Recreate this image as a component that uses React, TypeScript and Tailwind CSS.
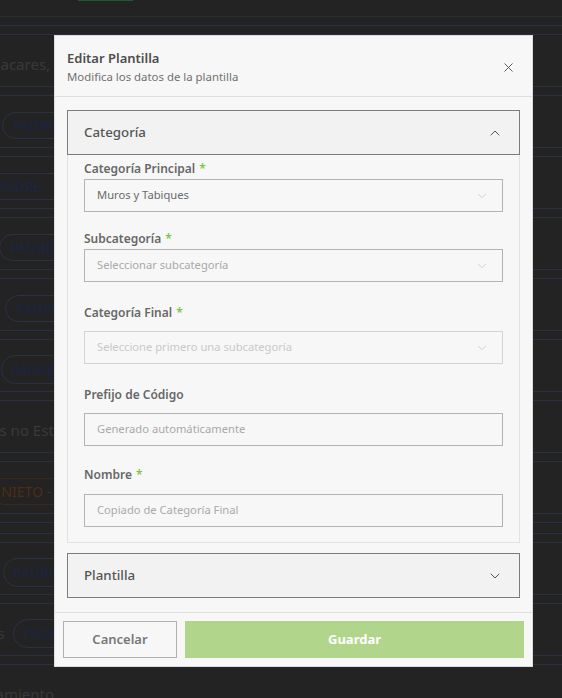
import { ChevronDown, ChevronUp, X } from "lucide-react";

const font = { fontFamily: '"Noto Sans", "Open Sans", sans-serif' };

function Pill({ text, tone = "blue" }: { text: string; tone?: "blue" | "orange" }) {
    const cls =
        tone === "orange"
            ? "border-[#3a2a1c] text-[#4e2e10]"
            : "border-[#2a3244] text-[#1b2542]";
    return (
        <span className={`whitespace-nowrap rounded-full border px-[10px] py-[3px] text-[14px] ${cls}`}>
            {text}
        </span>
    );
}

function BgRow({ children }: { children: React.ReactNode }) {
    return (
        <div className="flex h-[53px] shrink-0 items-center border-y border-[#2a3040] pt-2">
            <div className="flex w-[54px] justify-end whitespace-nowrap text-[15px] text-[#393939]">
                {children}
            </div>
        </div>
    );
}

function Field({
    label,
    required,
    value,
    placeholder,
    select,
    disabled,
    gap,
    top,
}: {
    label: string;
    required?: boolean;
    value?: string;
    placeholder?: string;
    select?: boolean;
    disabled?: boolean;
    gap: string;
    top: string;
}) {
    return (
        <div className={`flex flex-col ${top}`}>
            <label className={`text-[12px] font-semibold leading-4 text-[#676767] ${gap}`}>
                {label}
                {required && <span className="ml-1 text-[#7fc447]">*</span>}
            </label>
            <div
                className={`flex h-[33px] items-center justify-between border bg-[#f7f7f7] pl-3 pr-[13px] text-[11.2px] ${
                    disabled ? "border-[#d4d4d4]" : "border-[#b3b3b3]"
                }`}
            >
                <span className={value ? "text-[#6a6a6a]" : disabled ? "text-[#c9c9c9]" : "text-[#a9a9a9]"}>
                    {value || placeholder}
                </span>
                {select && <ChevronDown className="h-[14px] w-[14px] text-[#c4c4c4]" strokeWidth={1.25} />}
            </div>
        </div>
    );
}

function SectionHeader({ title, open }: { title: string; open?: boolean }) {
    return (
        <div className="flex h-[45px] items-center justify-between border border-[#7c7c7c] bg-[#f2f2f2] pl-4 pr-4">
            <span className="text-[13.3px] font-medium text-[#555]">{title}</span>
            {open ? (
                <ChevronUp className="h-4 w-4 text-[#555]" strokeWidth={1.5} />
            ) : (
                <ChevronDown className="h-4 w-4 text-[#555]" strokeWidth={1.5} />
            )}
        </div>
    );
}

export default function App() {
    return (
        <div className="relative h-[698px] w-[562px] overflow-hidden bg-[#232323]" style={font}>
            {/* page behind the overlay */}
            <div className="flex flex-col">
                <div className="h-[17px] border-b border-[#26302a]">
                    <div className="ml-[78px] h-[1px] w-[55px] bg-[#1f5a2a]" />
                </div>
                <div className="mt-[8px] h-[1px] bg-[#2a3040]" />
                <div className="flex flex-col gap-[8px] pt-[8px]">
                    <BgRow>
                        <span className="text-[#3a3a3a]">Aplacares,&nbsp;</span>
                    </BgRow>
                    <BgRow>
                        <span className="mr-[-33px]"><Pill text="PADRE - E" /></span>
                    </BgRow>
                    <BgRow>
                        <span className="mr-[-18px]"><Pill text="PADRE - E" /></span>
                    </BgRow>
                    <BgRow>
                        <span className="mr-[-30px]"><Pill text="PADRE - E" /></span>
                    </BgRow>
                    <BgRow>
                        <span className="mr-[-36px]"><Pill text="PADRE - E" /></span>
                    </BgRow>
                    <BgRow>
                        <span className="mr-[-12px] flex items-center gap-2">
                            <span>ues</span>
                            <Pill text="PADRE" />
                        </span>
                    </BgRow>
                    <BgRow>
                        <span className="mr-[-6px] text-[#3a3a3a]">s no Estr</span>
                    </BgRow>
                    <BgRow>
                        <span className="mr-[-19px]"><Pill text="NIETO - F" tone="orange" /></span>
                    </BgRow>
                    <div className="h-[12px] border-y border-[#2a3040]" />
                    <BgRow>
                        <span className="mr-[-14px] flex items-center gap-2">
                            <span>udas</span>
                            <Pill text="PADRE" />
                        </span>
                    </BgRow>
                    <BgRow>
                        <span className="mr-[-24px] flex items-center gap-2">
                            <span>s</span>
                            <Pill text="PADRE" />
                        </span>
                    </BgRow>
                    <BgRow>
                        <span className="flex items-center gap-2">
                            <span>Equipamiento</span>
                        </span>
                    </BgRow>
                </div>
            </div>

            {/* modal */}
            <div className="absolute left-[54px] top-[35px] flex w-[479px] flex-col border border-[#dcdcdc] bg-[#f7f7f7]">
                <div className="flex items-start justify-between border-b border-[#dedede] px-[12px] pb-[11px] pt-[13px]">
                    <div className="flex flex-col">
                        <h2 className="text-[13px] font-semibold leading-[19px] text-[#4d4d4d]">Editar Plantilla</h2>
                        <p className="text-[11.4px] leading-[17px] text-[#717171]">Modifica los datos de la plantilla</p>
                    </div>
                    <X className="mr-[4px] mt-[11px] h-[15px] w-[15px] text-[#555]" strokeWidth={1.5} />
                </div>

                <div className="flex flex-col px-[12px] pb-[14px] pt-[13px]">
                    <SectionHeader title="Categoría" open />
                    <div className="flex flex-col border-x border-b border-[#e2e2e2] px-[16px] pb-[15px] pt-[6px]">
                        <Field label="Categoría Principal" required value="Muros y Tabiques" select gap="mb-[2px]" top="" />
                        <Field label="Subcategoría" required placeholder="Seleccionar subcategoría" select gap="mb-[2px]" top="mt-[19px]" />
                        <Field label="Categoría Final" required placeholder="Seleccione primero una subcategoría" select disabled gap="mb-[10px]" top="mt-[23px]" />
                        <Field label="Prefijo de Código" placeholder="Generado automáticamente" gap="mb-[10px]" top="mt-[23px]" />
                        <Field label="Nombre" required placeholder="Copiado de Categoría Final" gap="mb-[11px]" top="mt-[21px]" />
                    </div>
                    <div className="mt-[10px]">
                        <SectionHeader title="Plantilla" />
                    </div>
                </div>

                <div className="flex gap-[8px] border-t border-[#dedede] px-[8px] pb-[8px] pt-[8px]">
                    <button className="h-[37px] w-[114px] border border-[#b0b0b0] bg-[#f7f7f7] text-[13px] font-semibold text-[#777]">
                        Cancelar
                    </button>
                    <button className="h-[37px] flex-1 bg-[#b1d68b] text-[13px] font-bold text-white">
                        Guardar
                    </button>
                </div>
            </div>
        </div>
    );
}
